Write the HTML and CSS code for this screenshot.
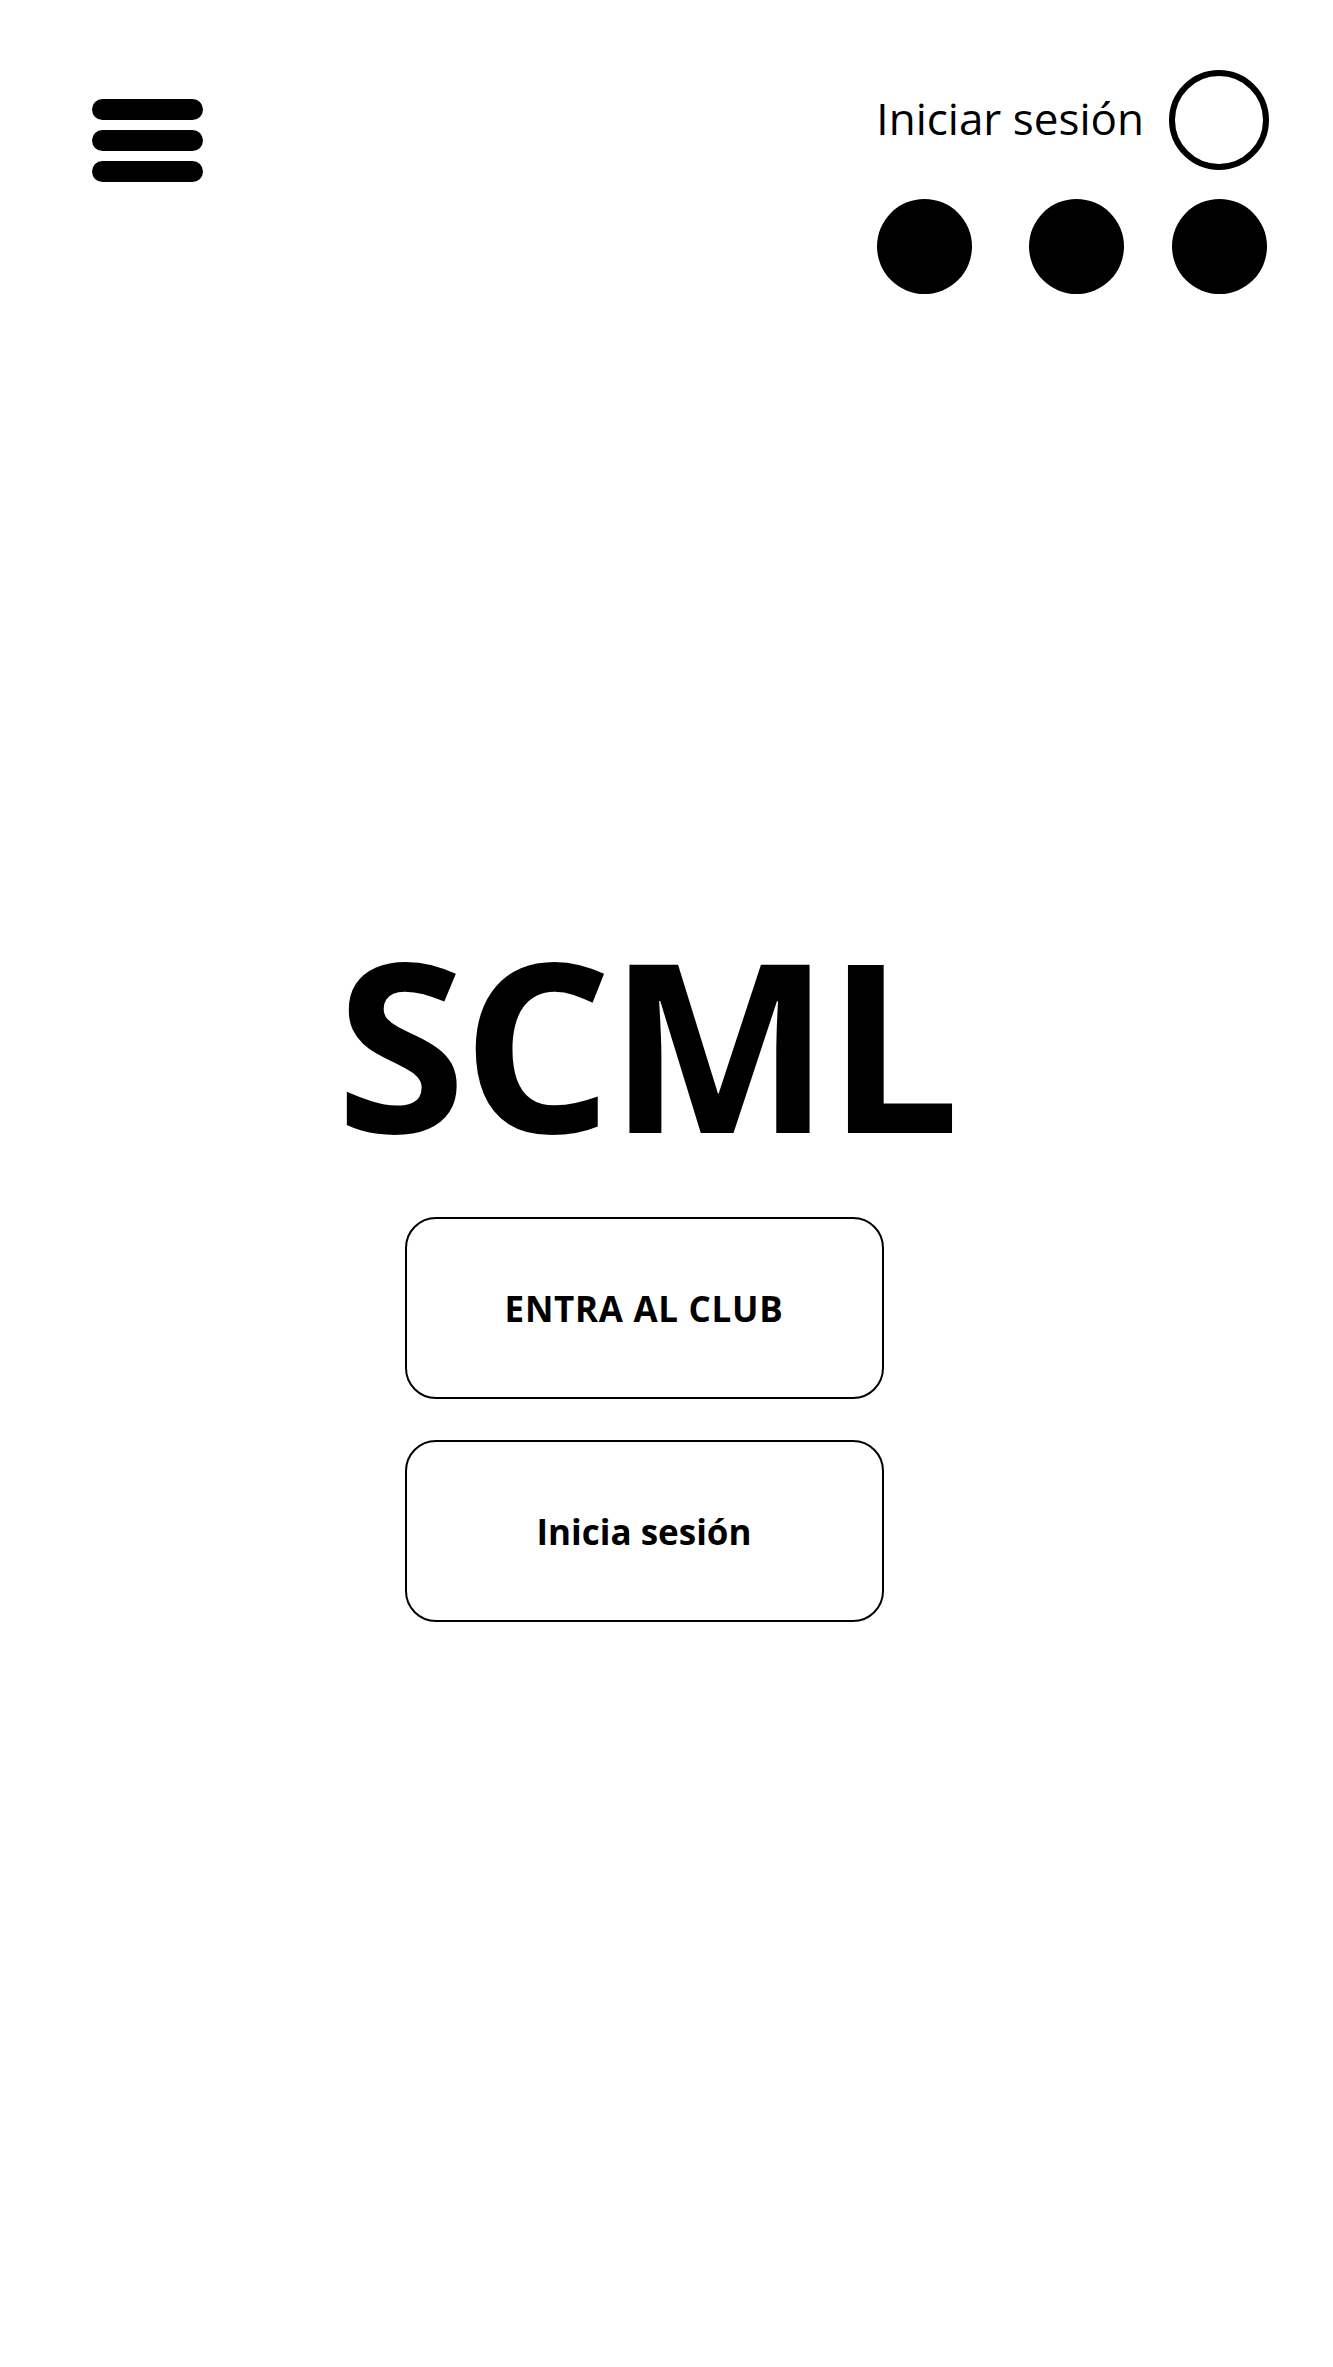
FILE: index.html
```html
<!DOCTYPE html>
<html lang="es">
<head>
<meta charset="utf-8">
<title>SCML</title>
<link rel="stylesheet" href="styles.css">
</head>
<body>
<div class="page">
  <header class="header">
    <button class="menu" aria-label="Menú">
      <span class="bar"></span>
      <span class="bar"></span>
      <span class="bar"></span>
    </button>
    <div class="account">
      <div class="login-row">
        <span class="login-text">Iniciar sesión</span>
        <span class="avatar"></span>
      </div>
      <div class="dots">
        <span class="dot dot-1"></span>
        <span class="dot dot-2"></span>
        <span class="dot dot-3"></span>
      </div>
    </div>
  </header>
  <main class="hero">
    <h1 class="title">SCML</h1>
    <div class="actions">
      <a class="action action-club" href="#">ENTRA AL CLUB</a>
      <a class="action" href="#">Inicia sesión</a>
    </div>
  </main>
</div>
</body>
</html>
```

FILE: styles.css
```css
* {
  box-sizing: border-box;
}

html, body {
  margin: 0;
  padding: 0;
  background: #ffffff;
}

body {
  font-family: "Open Sans", "Noto Sans", sans-serif;
  color: #000000;
}

.page {
  width: 1333px;
  min-height: 2367px;
  background: #ffffff;
}

.header {
  display: flex;
  justify-content: space-between;
  align-items: flex-start;
  padding: 70px 64px 0 92px;
}

.menu {
  display: flex;
  flex-direction: column;
  gap: 10px;
  margin-top: 29px;
  padding: 0;
  border: 0;
  background: transparent;
  cursor: pointer;
}

.bar {
  display: block;
  width: 111px;
  height: 21px;
  border-radius: 11px;
  background: #000000;
}

.account {
  display: flex;
  flex-direction: column;
  align-items: flex-end;
}

.login-row {
  display: flex;
  align-items: center;
  gap: 25px;
}

.login-text {
  font-size: 44px;
  font-weight: 400;
  line-height: 60px;
  margin-bottom: 4px;
  white-space: nowrap;
}

.avatar {
  display: block;
  width: 100px;
  height: 100px;
  border: 6px solid #000000;
  border-radius: 50%;
}

.dots {
  display: flex;
  margin-top: 29px;
  margin-right: 2px;
}

.dot {
  display: block;
  width: 95px;
  height: 95px;
  border-radius: 50%;
  background: #000000;
}

.dot-2 {
  margin-left: 57px;
}

.dot-3 {
  margin-left: 48px;
}

.hero {
  display: flex;
  flex-direction: column;
  align-items: center;
  padding-right: 45px;
}

.title {
  margin: 630px 0 0 4px;
  font-size: 236px;
  font-weight: 700;
  line-height: 236px;
  letter-spacing: -4px;
}

.actions {
  display: flex;
  flex-direction: column;
  gap: 41px;
  margin-top: 57px;
}

.action {
  display: flex;
  align-items: center;
  justify-content: center;
  width: 479px;
  height: 182px;
  border: 2px solid #000000;
  border-radius: 31px;
  font-size: 35px;
  font-weight: 700;
  color: #000000;
  text-decoration: none;
}

.action-club {
  letter-spacing: 0.7px;
}
```
